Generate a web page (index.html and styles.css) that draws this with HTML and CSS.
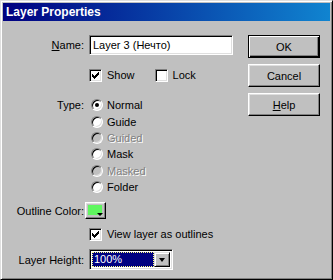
FILE: index.html
```html
<!DOCTYPE html>
<html>
<head>
<meta charset="utf-8">
<link rel="stylesheet" href="styles.css">
</head>
<body>
<div class="window">
  <div class="titlebar"><span class="title">Layer Properties</span></div>
  <div class="content">
    <div class="form">
      <div class="row row-name">
        <span class="lbl"><u>N</u>ame:</span>
        <div class="field">Layer 3 (Нечто)</div>
      </div>
      <div class="row row-show">
        <span class="lbl"></span>
        <div class="checks">
          <span class="opt"><span class="chk"><svg width="7" height="7" viewBox="0 0 7 7" shape-rendering="crispEdges"><path d="M6 0h1v1h-1zM5 1h2v1h-2zM0 2h1v1h-1zM4 2h3v1h-3zM0 3h2v1h-2zM3 3h3v1h-3zM0 4h5v1h-5zM1 5h3v1h-3zM2 6h1v1h-1z" fill="#000"/></svg></span>Show</span>
          <span class="opt opt-lock"><span class="chk"></span>Lock</span>
        </div>
      </div>
      <div class="row row-type">
        <span class="lbl">Type:</span>
        <div class="radios">
          <span class="opt"><span class="radio on"></span>Normal</span>
          <span class="opt"><span class="radio"></span>Guide</span>
          <span class="opt disabled"><span class="radio"></span>Guided</span>
          <span class="opt"><span class="radio"></span>Mask</span>
          <span class="opt disabled"><span class="radio"></span>Masked</span>
          <span class="opt"><span class="radio"></span>Folder</span>
        </div>
      </div>
      <div class="row row-color">
        <span class="lbl">Outline Color:</span>
        <span class="swatch"><span class="swatch-fill"></span><span class="swatch-arrow"></span></span>
      </div>
      <div class="row row-view">
        <span class="lbl"></span>
        <span class="opt"><span class="chk"><svg width="7" height="7" viewBox="0 0 7 7" shape-rendering="crispEdges"><path d="M6 0h1v1h-1zM5 1h2v1h-2zM0 2h1v1h-1zM4 2h3v1h-3zM0 3h2v1h-2zM3 3h3v1h-3zM0 4h5v1h-5zM1 5h3v1h-3zM2 6h1v1h-1z" fill="#000"/></svg></span>View layer as outlines</span>
      </div>
      <div class="row row-height">
        <span class="lbl">Layer Height:</span>
        <div class="select">
          <span class="sel-value"><span class="sel-focus">100%</span></span>
          <span class="sel-btn"><span class="tri"></span></span>
        </div>
      </div>
    </div>
    <div class="buttons">
      <div class="btn default"><span>OK</span></div>
      <div class="btn"><span>Cancel</span></div>
      <div class="btn"><span><u>H</u>elp</span></div>
    </div>
  </div>
</div>
</body>
</html>
```
FILE: styles.css
```css
html, body {
  margin: 0;
  padding: 0;
  background: #c0c0c0;
}
.window {
  width: 333px;
  height: 280px;
  box-sizing: border-box;
  background: #c0c0c0;
  border: 1px solid;
  border-color: #dfdfdf #000 #000 #dfdfdf;
  box-shadow: inset 1px 1px #fff, inset -1px -1px #808080;
  padding: 2px;
  font-family: "Liberation Sans", Arial, sans-serif;
  font-size: 11px;
  color: #000;
}
.titlebar {
  height: 18px;
  background: linear-gradient(to right, #000080, #1084d0);
  display: flex;
  align-items: center;
  padding-left: 3px;
}
.title {
  color: #fff;
  font-weight: bold;
  font-size: 12px;
}
.content {
  display: flex;
  padding-top: 14px;
}
.form {
  width: 245px;
  display: flex;
  flex-direction: column;
}
.row {
  display: flex;
  align-items: center;
}
.lbl {
  width: 81px;
  flex: none;
  text-align: right;
  margin-right: 5px;
}
u { text-decoration: underline; text-underline-offset: 1px; }
.row-name { height: 20px; }
.field {
  width: 144px;
  height: 20px;
  box-sizing: border-box;
  background: #fff;
  border: 1px solid;
  border-color: #808080 #fff #fff #808080;
  box-shadow: inset 1px 1px #000, inset -1px -1px #dfdfdf;
  padding: 3px 0 0 3px;
  line-height: 13px;
}
.row-show { margin-top: 12px; height: 16px; }
.checks { display: flex; }
.opt {
  display: flex;
  align-items: center;
  height: 16px;
}
.opt-lock { margin-left: 20px; }
.chk {
  width: 13px;
  height: 13px;
  box-sizing: border-box;
  background: #fff;
  border: 1px solid;
  border-color: #808080 #fff #fff #808080;
  box-shadow: inset 1px 1px #000, inset -1px -1px #dfdfdf;
  margin-right: 5px;
  display: flex;
  align-items: center;
  justify-content: center;
  flex: none;
}
.chk svg { display: block; }
.row-type { margin-top: 14px; align-items: flex-start; }
.row-type .lbl { line-height: 16px; }
.radios { display: flex; flex-direction: column; }
.radios .opt { height: 16.4px; }
.radio {
  width: 12px;
  height: 12px;
  box-sizing: border-box;
  border-radius: 50%;
  background: #fff;
  border: 1px solid;
  border-color: #808080 #fff #fff #808080;
  box-shadow: inset 1px 1px #000, inset -1px -1px #dfdfdf;
  margin-left: 2px;
  margin-right: 4px;
  position: relative;
  flex: none;
}
.radio.on::after {
  content: "";
  position: absolute;
  left: 3px;
  top: 3px;
  width: 4px;
  height: 4px;
  border-radius: 50%;
  background: #000;
}
.disabled { color: #808080; text-shadow: 1px 1px #fff; }
.disabled .radio { background: #c0c0c0; }
.row-color { margin-top: 7px; height: 17px; }
.row-color .lbl { margin-right: 1px; }
.swatch {
  width: 21px;
  height: 17px;
  box-sizing: border-box;
  border: 1px solid;
  border-color: #fff #000 #000 #fff;
  box-shadow: inset -1px -1px #808080, inset 1px 1px #dfdfdf;
  padding: 2px 3px 3px 2px;
  display: flex;
  position: relative;
}
.swatch-fill { flex: 1; background: #5ff75f; }
.swatch-arrow {
  position: absolute;
  right: 2px;
  bottom: 2px;
  width: 0;
  height: 0;
  border-left: 3px solid transparent;
  border-right: 3px solid transparent;
  border-top: 3px solid #000;
}
.row-view { margin-top: 7px; height: 16px; }
.row-height { margin-top: 7px; height: 21px; }
.select {
  width: 84px;
  height: 21px;
  box-sizing: border-box;
  background: #fff;
  border: 1px solid;
  border-color: #808080 #fff #fff #808080;
  box-shadow: inset 1px 1px #000, inset -1px -1px #dfdfdf;
  padding: 2px;
  display: flex;
}
.sel-value {
  flex: 1;
  background: #000080;
  color: #fff;
  display: flex;
  margin-right: 0;
}
.sel-focus {
  flex: 1;
  border: 1px dotted #ffff7f;
  padding-left: 1px;
  line-height: 13px;
}
.sel-btn {
  width: 16px;
  box-sizing: border-box;
  background: #c0c0c0;
  border: 1px solid;
  border-color: #dfdfdf #000 #000 #dfdfdf;
  box-shadow: inset 1px 1px #fff, inset -1px -1px #808080;
  display: flex;
  align-items: center;
  justify-content: center;
}
.tri {
  width: 0;
  height: 0;
  border-left: 3.5px solid transparent;
  border-right: 3.5px solid transparent;
  border-top: 4px solid #000;
}
.buttons {
  margin-left: 0;
  display: flex;
  flex-direction: column;
  gap: 6px;
  padding-top: 0;
}
.btn {
  width: 72px;
  height: 23px;
  box-sizing: border-box;
  border: 1px solid;
  border-color: #fff #000 #000 #fff;
  box-shadow: inset -1px -1px #808080, inset 1px 1px #dfdfdf;
  display: flex;
  align-items: center;
  justify-content: center;
}
.btn.default {
  border: 1px solid #000;
  box-shadow: inset 1px 1px #fff, inset -1px -1px #000, inset -2px -2px #808080;
}
```
